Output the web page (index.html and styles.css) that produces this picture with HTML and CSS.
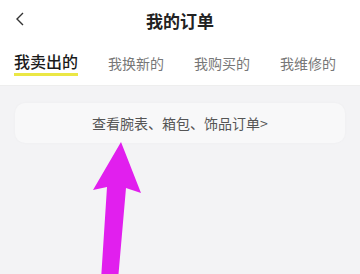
FILE: index.html
```html
<!DOCTYPE html>
<html lang="zh">
<head>
<meta charset="utf-8">
<link rel="stylesheet" href="styles.css">
</head>
<body>
<div class="page">
  <header class="topbar">
    <svg class="back" width="12" height="14" viewBox="0 0 12 14"><path d="M9 1 L3 7 L9 13" fill="none" stroke="#333" stroke-width="1.4"/></svg>
    <h1 class="title">我的订单</h1>
  </header>
  <nav class="tabs">
    <div class="tab active">我卖出的</div>
    <div class="tab">我换新的</div>
    <div class="tab">我购买的</div>
    <div class="tab">我维修的</div>
  </nav>
  <main class="content">
    <div class="card">查看腕表、箱包、饰品订单&gt;</div>
  </main>
  <svg class="arrow" width="360" height="274" viewBox="0 0 360 274"><polygon points="121,142 141,193 126,188 118,280 101,280 107,187 93,190" fill="#e11fee"/></svg>
</div>
</body>
</html>
```
FILE: styles.css
```css
* { box-sizing: border-box; margin: 0; padding: 0; }
html, body { width: 360px; height: 274px; overflow: hidden; }
body { font-family: "Noto Sans CJK SC", "Noto Sans", sans-serif; background: #f3f3f5; }
.page { position: relative; width: 360px; height: 274px; }
.topbar { position: relative; height: 40px; background: #fff; display: flex; align-items: center; justify-content: center; }
.back { position: absolute; left: 14px; top: 12px; }
.title { font-size: 17px; font-weight: 700; color: #222; line-height: 1; }
.tabs { background: #fff; height: 46px; display: flex; align-items: flex-start; padding: 10px 0 0 14px; gap: 30px; border-bottom: 1px solid #eee; }
.tab { font-size: 14px; color: #777; line-height: 22px; margin-top: 2px; }
.tab.active { font-size: 16px; color: #1a1a1a; font-weight: 500; line-height: 22px; margin-top: 0; padding-bottom: 1px; border-bottom: 3px solid #ebe745; }
.content { padding: 17px 15px 0 15px; }
.card { height: 40px; background: #f8f8f9; border-radius: 10px; display: flex; align-items: center; justify-content: center; font-size: 14px; color: #555; box-shadow: 0 0 3px rgba(0,0,0,0.03); }
.arrow { position: absolute; left: 0; top: 0; }
```
